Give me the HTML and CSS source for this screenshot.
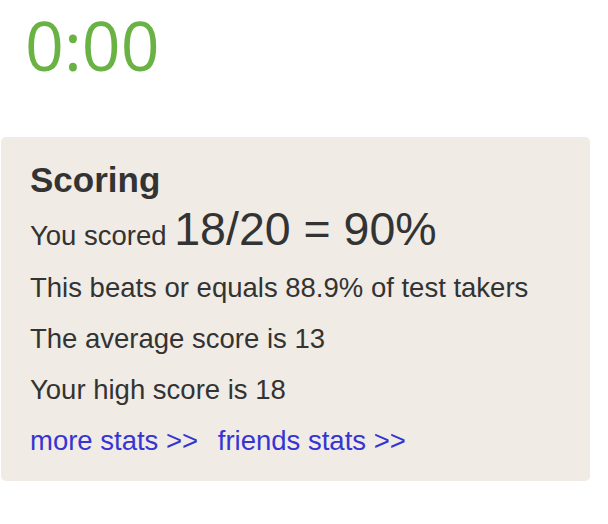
FILE: index.html
```html
<!DOCTYPE html>
<html>
    <head>
        <title>Quiz results</title>
        <link rel="stylesheet" href="styles.css">
    </head>
    <body>
        <div id="timer">0:00</div>

        <div class="scoreBox">
            <h2>Scoring</h2>
            <p class="scored">You scored <span class="bigScore">18/20 = 90%</span></p>
            <p>This beats or equals 88.9% of test takers</p>
            <p>The average score is 13</p>
            <p>Your high score is 18</p>
            <p class="links">
                <a href="#">more stats &gt;&gt;</a>
                <a href="#">friends stats &gt;&gt;</a>
            </p>
        </div>
    </body>
</html>
```

FILE: styles.css
```css
body {
    margin: 0;
    padding: 0 18px 0 1px;
    font-family: "Liberation Sans", Arial, sans-serif;
    color: #333;
}

#timer {
    font-family: "Open Sans", sans-serif;
    font-size: 68px;
    color: #6ab244;
    line-height: 90px;
    padding-left: 24px;
    margin-bottom: 47px;
}

.scoreBox {
    background: #f0ebe5;
    border-radius: 5px;
    padding: 23px 29px 15px 29px;
}

.scoreBox h2 {
    font-size: 35px;
    margin: 0;
    line-height: 40px;
}

.scoreBox p {
    font-size: 27.5px;
    margin: 0;
    line-height: 51px;
}

.scoreBox .scored {
    padding-top: 3px;
    line-height: 52px;
}

.bigScore {
    font-size: 46.5px;
}

.links a {
    color: #3535d3;
    text-decoration: none;
    margin-right: 12px;
}
```
